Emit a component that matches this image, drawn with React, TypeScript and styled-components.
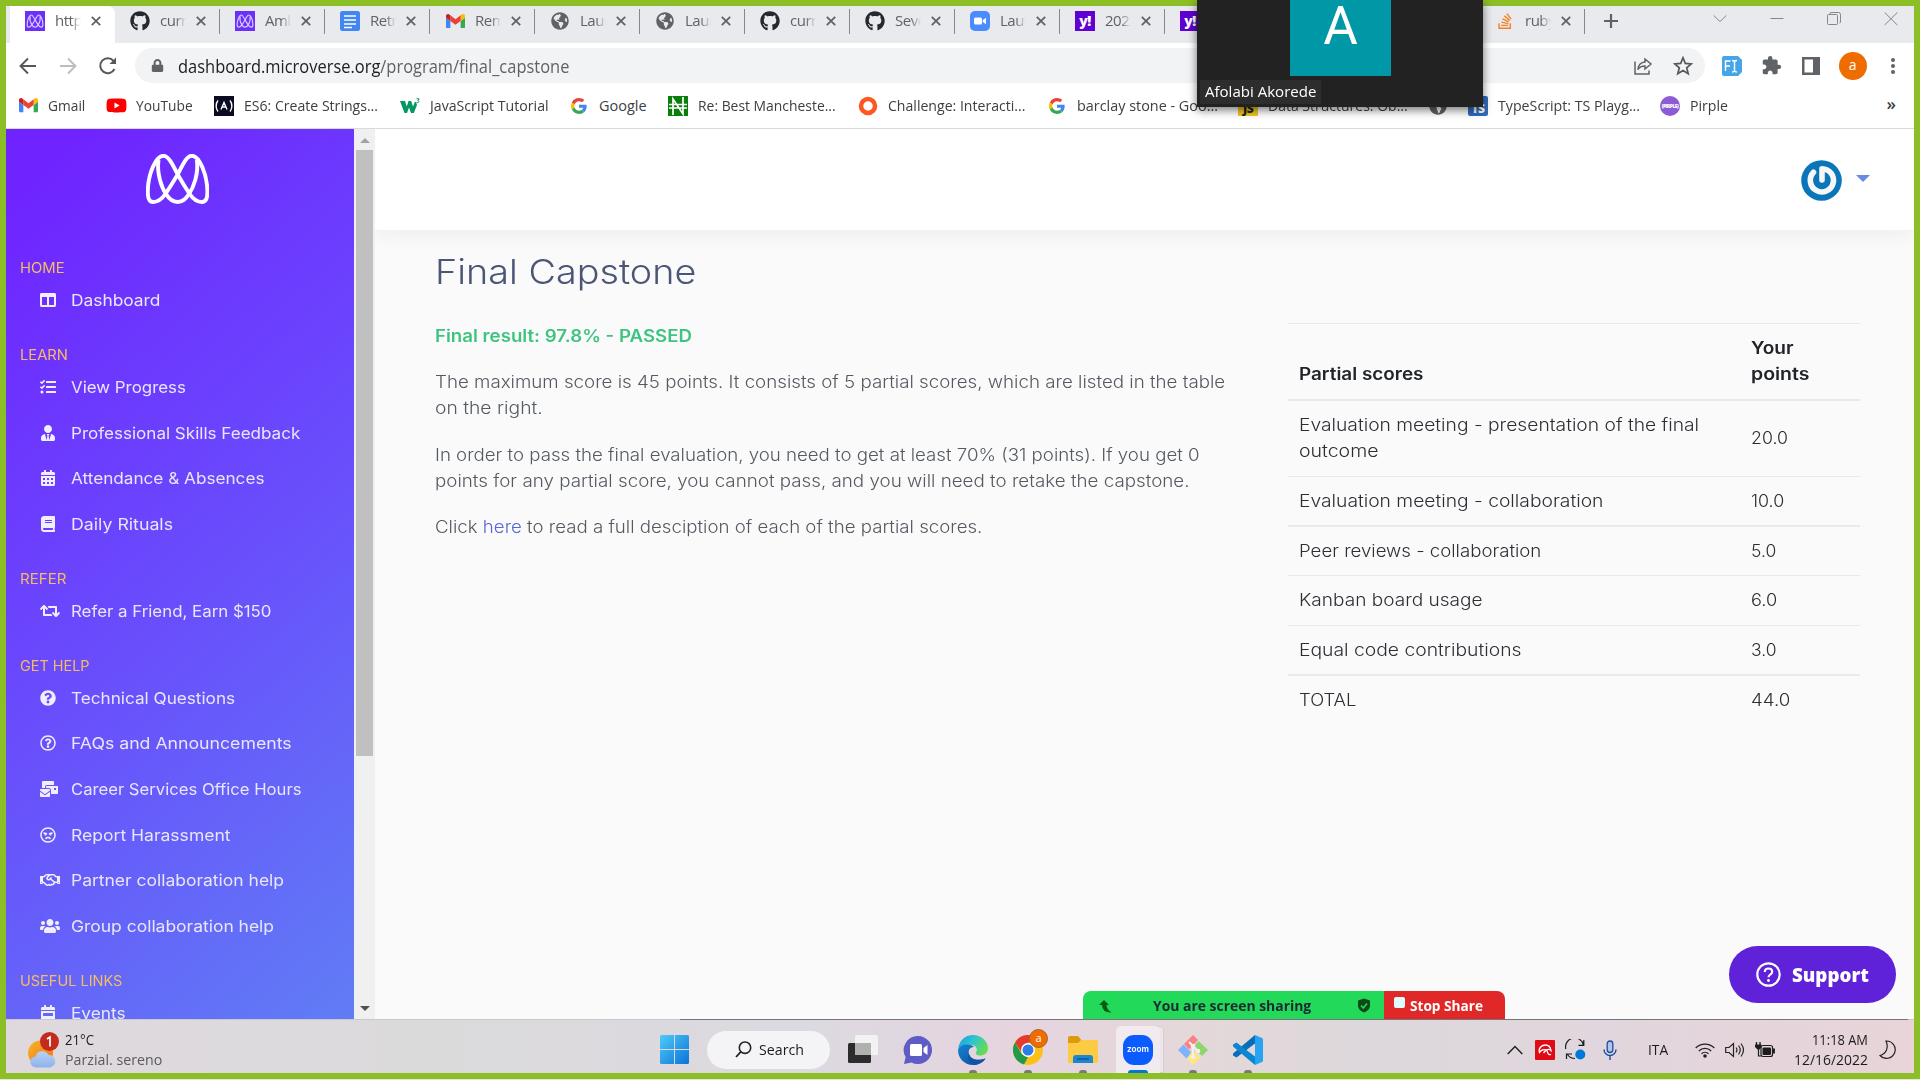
import React, { useLayoutEffect, useRef, useState } from 'react';
import styled, { createGlobalStyle, css } from 'styled-components';
import {
  FaColumns, FaTasks, FaUserTie, FaCalendarAlt, FaBook, FaRetweet, FaQuestionCircle,
  FaRegQuestionCircle, FaMailBulk, FaRegAngry, FaRegHandshake, FaUsers, FaCalendarWeek,
  FaGithub, FaGlobeAmericas, FaYoutube, FaLock, FaStackOverflow,
} from 'react-icons/fa';
import { MdExtension } from 'react-icons/md';

const ui = `"Open Sans", "Noto Sans", sans-serif`;
const brand = `Inter, "Open Sans", sans-serif`;

const Global = createGlobalStyle`
  * { box-sizing: border-box; }
  html, body { margin: 0; padding: 0; overflow: hidden; }
  body { font-family: ${ui}; background: #e9e1e4; }
  svg { display: block; flex: none; }
`;

/* Text stretched to a fixed measure */
const FitBox = styled.span<{ $w: number }>`
  display: inline-block;
  flex: none;
  width: ${p => p.$w}px;
  white-space: nowrap;
`;
const FitInner = styled.span`
  display: inline-block;
  transform-origin: 0 50%;
`;
function Fit({ w, children }: { w: number; children: React.ReactNode }) {
  const ref = useRef<HTMLSpanElement>(null);
  const [k, setK] = useState(1);
  useLayoutEffect(() => {
    if (ref.current && ref.current.offsetWidth) setK(w / ref.current.offsetWidth);
  }, [w]);
  return (
    <FitBox $w={w}>
      <FitInner ref={ref} style={{ transform: `scaleX(${k})` }}>{children}</FitInner>
    </FitBox>
  );
}

const Desktop = styled.div`
  position: relative;
  width: 1920px;
  height: 1080px;
  overflow: hidden;
`;
const Screen = styled.div`
  position: relative;
  width: 1920px;
  height: 1079px;
  border: 6px solid #8cbe26;
  display: flex;
  flex-direction: column;
  overflow: hidden;
  background: #fff;
`;

/* ---------- tab strip ---------- */
const TabStrip = styled.div`
  height: 37px;
  flex: none;
  display: flex;
  background: #e8eaed;
  padding-left: 4px;
`;
const TabItem = styled.div<{ $active?: boolean; $line?: boolean }>`
  width: 105px;
  flex: none;
  height: 37px;
  padding: 0 0 0 15px;
  display: flex;
  align-items: flex-start;
  position: relative;
  border-radius: 0 8px 0 0;
  background: ${p => (p.$active ? '#fff' : 'transparent')};
  ${p => p.$line && css`
    &::after { content: ''; position: absolute; right: 0; top: 3px; width: 1px; height: 25px; background: #85888c; }
  `}
`;
const Favicon = styled.div`
  width: 20px;
  height: 20px;
  margin-top: 5px;
  display: flex;
  align-items: center;
  justify-content: center;
`;
const TabTitle = styled.div`
  width: 26px;
  margin: 3px 0 0 10px;
  overflow: hidden;
  white-space: nowrap;
  font-size: 15px;
  line-height: 22px;
  letter-spacing: -0.5px;
  color: #5f6368;
  mask-image: linear-gradient(90deg, #000 60%, transparent 100%);
`;
const TabClose = styled.div`
  margin: 10px 0 0 10px;
`;
const NewTab = styled.div`
  margin: 7px 0 0 18px;
`;
const WindowControls = styled.div`
  margin-left: auto;
  display: flex;
  gap: 43px;
  padding: 5px 16px 0 0;
`;

/* ---------- toolbar ---------- */
const Toolbar = styled.div`
  height: 45px;
  flex: none;
  display: flex;
  align-items: center;
  padding: 0 14px 0 12px;
`;
const NavButtons = styled.div`
  display: flex;
  gap: 20px;
  width: 117px;
`;
const Omnibox = styled.div`
  width: 1570px;
  height: 35px;
  border-radius: 18px;
  background: #f1f3f4;
  display: flex;
  align-items: center;
  padding: 0 12px 0 16px;
  font-size: 17.5px;
  color: #5f6368;
`;
const Host = styled.span`
  color: #202124;
`;
const UrlText = styled.div`
  margin-left: 14px;
  margin-right: auto;
  line-height: 24px;
`;
const OmniActions = styled.div`
  display: flex;
  gap: 20px;
`;
const Extensions = styled.div`
  display: flex;
  align-items: center;
  margin-left: 17px;
  flex: 1;
  justify-content: space-between;
`;
const Profile = styled.div`
  width: 28px;
  height: 28px;
  border-radius: 50%;
  background: #ef6c00;
  color: #fff;
  font-size: 14px;
  line-height: 26px;
  text-align: center;
`;

/* ---------- bookmarks ---------- */
const Bookmarks = styled.div`
  height: 41px;
  flex: none;
  display: flex;
  align-items: center;
  padding: 0 0 5px 12px;
  border-bottom: 1px solid #d9dadc;
  position: relative;
`;
const Bookmark = styled.div<{ $gap: number }>`
  display: flex;
  align-items: center;
  margin-right: ${p => p.$gap}px;
  gap: 10px;
  font-size: 14.5px;
  line-height: 20px;
  color: #3c4043;
`;
const BookmarkIcon = styled.div`
  width: 20px;
  height: 20px;
  display: flex;
  align-items: center;
  justify-content: center;
`;
const More = styled.div`
  margin: -3px 18px 0 auto;
  font-size: 17px;
  line-height: 20px;
  font-weight: 600;
  color: #3c4043;
`;

/* ---------- page ---------- */
const Page = styled.div`
  flex: 1;
  min-height: 0;
  display: flex;
`;
const Sidebar = styled.nav`
  width: 348px;
  flex: none;
  overflow: hidden;
  background: linear-gradient(138deg, #6f23ff 5%, #6a47fd 45%, #607df5 100%);
  font-family: ${brand};
`;
const LogoRow = styled.div`
  height: 123px;
  padding: 25px 0 0 140px;
`;
const Section = styled.div`
  margin-bottom: 23px;
`;
const SectionTitle = styled.div`
  height: 32px;
  padding-left: 14px;
  line-height: 33px;
  font-size: 13.8px;
  color: #f5bd61;
`;
const NavItem = styled.div`
  height: 32px;
  margin-bottom: 13.6px;
  padding-left: 34px;
  display: flex;
  align-items: center;
  font-size: 16px;
  color: #e9e6fb;
  &:last-child { margin-bottom: 0; }
`;
const NavIcon = styled.div`
  width: 31px;
  font-size: 16px;
  color: #f0eefc;
`;
const Scrollbar = styled.div`
  width: 21px;
  flex: none;
  background: #f0f0f0;
  display: flex;
  flex-direction: column;
  align-items: center;
  padding: 9px 0 8px;
`;
const Thumb = styled.div`
  width: 17px;
  height: 606px;
  margin: 7px 0 auto;
  background: #c0c0c0;
`;
const Arrow = styled.div<{ $down?: boolean }>`
  border: 5px solid transparent;
  border-top-width: ${p => (p.$down ? 5 : 0)}px;
  border-bottom-width: ${p => (p.$down ? 0 : 5)}px;
  border-top-color: ${p => (p.$down ? '#505050' : 'transparent')};
  border-bottom-color: ${p => (p.$down ? 'transparent' : '#a3a3a3')};
`;
const Main = styled.main`
  flex: 1;
  background: #fafafa;
  font-family: ${brand};
  display: flex;
  flex-direction: column;
`;
const TopBar = styled.header`
  height: 101px;
  flex: none;
  background: #fff;
  box-shadow: 0 3px 18px rgba(90, 97, 105, 0.09);
  clip-path: inset(0 0 -30px 0);
  display: flex;
  justify-content: flex-end;
  align-items: center;
  gap: 14px;
  padding: 1px 44px 0 0;
`;
const Caret = styled.div`
  border: 7px solid transparent;
  border-top-color: #6889e4;
  border-bottom-width: 0;
  margin-top: -3px;
`;
const Title = styled.h1`
  margin: 0;
  padding: 19px 0 0 60px;
  height: 93px;
  font-size: 34px;
  line-height: 46px;
  font-weight: 300;
  color: #4b5674;
`;
const Columns = styled.div`
  display: flex;
  padding-left: 60px;
`;
const Copy = styled.section`
  width: 853px;
  flex: none;
  font-size: 16.8px;
  line-height: 26px;
  font-weight: 350;
  color: #545a62;
`;
const Result = styled.p`
  margin: 0 0 20.4px;
  font-weight: 600;
  color: #3ec480;
`;
const Para = styled.p`
  margin: 0 0 20.4px;
  display: flex;
  flex-direction: column;
  align-items: flex-start;
`;
const Anchor = styled.a`
  color: #5767d8;
`;
const Scores = styled.div`
  width: 572px;
  border-top: 1px solid #e6e9ed;
  font-size: 16.8px;
  line-height: 26px;
  font-weight: 350;
  color: #2b2f34;
`;
const ScoreRow = styled.div<{ $heavy?: boolean; $head?: boolean; $h: number; $last?: boolean }>`
  display: grid;
  grid-template-columns: 452px 1fr;
  align-items: ${p => (p.$head ? 'end' : 'center')};
  height: ${p => p.$h}px;
  padding: ${p => (p.$head ? '0 0 12px 11px' : '0 0 1px 11px')};
  border-bottom: ${p => (p.$last ? 0 : p.$heavy ? 2 : 1)}px solid #e6ebef;
  ${p => p.$head && css`font-weight: 600; color: #212529;`}
`;
const Lines = styled.div`
  display: flex;
  flex-direction: column;
`;

/* ---------- floating pieces ---------- */
const Participant = styled.div`
  position: absolute;
  left: 1197px;
  top: 0;
  width: 286px;
  height: 107px;
  background: #222;
  box-shadow: 0 3px 9px rgba(0, 0, 0, 0.55);
  z-index: 4;
  display: flex;
  flex-direction: column;
  align-items: flex-start;
`;
const Initial = styled.div`
  width: 101px;
  height: 76px;
  margin-left: 93px;
  background: #0097a7;
  color: #fff;
  font-family: Roboto, sans-serif;
  font-size: 53px;
  line-height: 53px;
  text-align: center;
`;
const PersonName = styled.div`
  margin: 4px 0 0 3px;
  height: 24px;
  padding: 0 5px;
  background: #2d2d2d;
  color: #fff;
  font-size: 14.5px;
  line-height: 24px;
`;
const Support = styled.button`
  position: absolute;
  left: 1723px;
  top: 940px;
  width: 167px;
  height: 57px;
  border: 0;
  border-radius: 29px;
  padding: 0 0 0 27px;
  background: #5f22d9;
  color: #fff;
  display: flex;
  align-items: center;
  gap: 10px;
  font: 800 18.5px/26px ${ui};
`;
const ShareBar = styled.div`
  position: absolute;
  left: 1077px;
  top: 985px;
  width: 422px;
  height: 28px;
  border-radius: 8px 8px 0 0;
  overflow: hidden;
  display: flex;
  font-size: 14px;
  font-weight: 700;
  line-height: 29px;
`;
const Sharing = styled.div`
  width: 301px;
  background: #23d959;
  color: #1c2b33;
  display: flex;
  align-items: center;
  padding: 1px 0 0 15px;
`;
const SharingText = styled.div`
  margin: 0 46px 0 41px;
`;
const StopShare = styled.div`
  flex: 1;
  background: #e02828;
  color: #fff;
  display: flex;
  padding-left: 10px;
  gap: 5px;
`;
const StopSquare = styled.div`
  width: 11px;
  height: 11px;
  margin-top: 6px;
  border-radius: 2px;
  background: #e1fbfb;
`;

/* ---------- taskbar ---------- */
const Taskbar = styled.footer`
  height: 54px;
  flex: none;
  display: flex;
  align-items: center;
  padding-top: 6px;
  background: linear-gradient(90deg, #dfd9de 0, #dbdadb 22%, #dcd9e0 42%, #e6d4df 53%, #e4d8d9 62%, #dcd8dc 72%, #e1d6dd 84%, #e8d4d9 100%);
  border-top: 1px solid #c9c8ca;
  position: relative;
`;
const WindowEdge = styled.div`
  position: absolute;
  left: 674px;
  top: -1px;
  width: 1228px;
  height: 1px;
  background: #77757a;
`;
const Weather = styled.div`
  display: flex;
  width: 654px;
  padding-left: 21px;
  gap: 6px;
  align-items: center;
`;
const WeatherText = styled.div`
  display: flex;
  flex-direction: column;
  font-size: 14.5px;
  line-height: 20px;
  color: #1f1f1f;
  & > :last-child { color: #5a5a5c; }
`;
const SearchPill = styled.div`
  width: 123px;
  height: 38px;
  margin: 0 18px;
  border-radius: 19px;
  background: #f4f3f6;
  display: flex;
  align-items: center;
  padding-left: 28px;
  gap: 7px;
  font-size: 14.5px;
  color: #1b1b1b;
`;
const AppSlot = styled.div<{ $open?: boolean; $focus?: boolean }>`
  width: 55px;
  height: 53px;
  flex: none;
  display: flex;
  align-items: center;
  justify-content: center;
  padding-top: 6px;
  position: relative;
  ${p => p.$open && css`
    &::after {
      content: ''; position: absolute; bottom: 0; left: 50%; transform: translateX(-50%);
      width: ${p.$focus ? 20 : 8}px; height: 3px; border-radius: 3px 3px 0 0;
      background: ${p.$focus ? '#0078d4' : '#7d777b'};
    }
  `}
`;
const Apps = styled.div`
  display: flex;
  margin: -6px 0 0 -13px;
`;
const FocusTile = styled.div`
  width: 44px;
  height: 47px;
  border-radius: 5px 5px 0 0;
  background: #f1eaee;
  box-shadow: 4px 0 0 -1px #eee5ea, 4px 0 0 0 #d6cdd2;
  display: flex;
  justify-content: center;
  padding-top: 9px;
`;
const ZoomLogo = styled.div`
  width: 30px;
  height: 30px;
  border-radius: 11px;
  background: #0b5cff;
  color: #fff;
  font: 600 9px/28px Inter, sans-serif;
  text-align: center;
`;
const Tray = styled.div`
  margin-left: auto;
  display: flex;
  align-items: center;
  padding-right: 18px;
  font-size: 14.5px;
  color: #1c1c1c;
`;
const TrayItem = styled.div<{ $ml: number }>`
  margin-left: ${p => p.$ml}px;
`;
const Clock = styled.div`
  margin: 0 11px 0 19px;
  display: flex;
  flex-direction: column;
  align-items: flex-end;
  line-height: 20px;
`;
const Badge = styled.div`
  position: absolute;
  left: 29px;
  top: 9px;
  width: 19px;
  height: 19px;
  border-radius: 50%;
  background: #ef6c00;
  border: 1px solid #a8632a;
  color: #fff;
  font-size: 11px;
  line-height: 16px;
  text-align: center;
`;

/* ---------- drawings ---------- */
const MPath = () => (
  <>
    <path d="M17.3 1.8C10 1.8 1.8 20 1.8 38 1.8 45 3.5 48 7 48c5 0 9-3 12.7-8.5 4.3-6.5 7.3-11.500 12-19C37 10 40.500 1.8 46 1.800 53 1.800 61.400 20 61.400 38c0 7-1.900 10-5.400 10-5 0-9-3-12.700-8.500-4.300-6.500-7.300-11.500-11.600-19C26.500 10 22.500 1.800 17.300 1.800Z" />
    <path d="M12.500 6C10.500 20 16 34 19.700 39.500 23 45 27 48 31.700 48c4.800 0 8.300-3 11.600-8.500C47 34 53 20 50.800 6" />
  </>
);
const Logo = () => (
  <svg width="63" height="50" viewBox="0 0 63 50" fill="none" stroke="#fff" strokeWidth="3.9"><MPath /></svg>
);
const MFav = () => (
  <svg width="20" height="20" viewBox="0 0 20 20">
    <rect width="20" height="20" fill="#6a2ff8" />
    <g transform="translate(1.700 3.500) scale(.264)" fill="none" stroke="#d9c8ff" strokeWidth="4.500"><MPath /></g>
  </svg>
);
const Gmail = ({ s = 19 }: { s?: number }) => (
  <svg width={s} height={s * 0.76} viewBox="0 0 24 18">
    <path d="M1.600 18h3.900V8.700L0 4.500v11.900C0 17.300.7 18 1.600 18z" fill="#4285f4" />
    <path d="M18.500 18h3.900c.9 0 1.600-.7 1.600-1.600V4.500l-5.500 4.200z" fill="#34a853" />
    <path d="M18.500 1.600v7.100L24 4.500V2.400c0-2-2.300-3.200-3.900-2z" fill="#fbbc04" />
    <path d="M5.500 8.700V1.600L12 6.500l6.500-4.900v7.100L12 13.600z" fill="#ea4335" />
    <path d="M0 2.400v2.100l5.500 4.200V1.600L3.900.4C2.300-.8 0 .4 0 2.400z" fill="#c5221f" />
  </svg>
);
const GoogleG = () => (
  <svg width="16" height="16" viewBox="0 0 48 48">
    <path fill="#EA4335" d="M24 9.500c3.540 0 6.710 1.220 9.210 3.600l6.850-6.850C35.900 2.380 30.470 0 24 0 14.620 0 6.510 5.380 2.560 13.220l7.980 6.190C12.430 13.720 17.740 9.500 24 9.500z" />
    <path fill="#4285F4" d="M46.980 24.550c0-1.570-.15-3.090-.38-4.550H24v9.020h12.940c-.58 2.960-2.260 5.480-4.780 7.180l7.730 6c4.510-4.180 7.090-10.360 7.090-17.650z" />
    <path fill="#FBBC05" d="M10.530 28.590c-.48-1.450-.76-2.990-.76-4.590s.27-3.140.76-4.590l-7.980-6.190C.92 16.460 0 20.120 0 24c0 3.880.92 7.540 2.560 10.780l7.970-6.190z" />
    <path fill="#34A853" d="M24 48c6.480 0 11.930-2.130 15.890-5.810l-7.730-6c-2.150 1.450-4.920 2.300-8.160 2.300-6.260 0-11.570-4.220-13.470-9.910l-7.980 6.190C6.510 42.620 14.620 48 24 48z" />
  </svg>
);
const Docs = () => (
  <svg width="20" height="20" viewBox="0 0 20 20">
    <rect width="20" height="20" rx="2.500" fill="#4285f4" />
    <path d="M4 5h12M4 9h12M4 13h12M4 16.500h8" stroke="#fff" strokeWidth="1.700" />
  </svg>
);
const ZoomCam = () => (
  <svg width="20" height="20" viewBox="0 0 20 20">
    <rect width="20" height="20" rx="5" fill="#4a8cff" />
    <rect x="4" y="6.500" width="8" height="7" rx="1.500" fill="#fff" />
    <path d="M12.800 9l3.200-2.300v6.600L12.800 11z" fill="#fff" />
  </svg>
);
const Square = styled.div<{ $bg: string; $fg?: string; $size?: number; $round?: string }>`
  width: 20px;
  height: 20px;
  background: ${p => p.$bg};
  color: ${p => p.$fg || '#fff'};
  border-radius: ${p => p.$round || '0'};
  font: 800 ${p => p.$size || 12}px/20px ${ui};
  text-align: center;
  letter-spacing: -0.5px;
  overflow: hidden;
`;
const LowSquare = styled(Square)`
  line-height: 26px;
`;
const Yahoo = () => <Square $bg="#5f01d1" $size={14}>y!</Square>;
const Cross = ({ s = 9 }: { s?: number }) => (
  <svg width={s + 1} height={s + 1} viewBox="0 0 10 10"><path d="M.8.8l8.400 8.400M9.200.8L.8 9.200" stroke="#5f6368" strokeWidth="1.800" /></svg>
);
const W3 = () => (
  <svg width="20" height="16" viewBox="0 0 20 16">
    <path d="M0 3h5l1.800 5.500L8.500 3h2.700l1.800 5.500L14.800 4H16l1 3-3.200 8H11L9 9.500 7 15H4.500z" fill="#059862" />
    <path d="M16.500 .8h2.700l-1.300 1.800c1.300 0 1.600 2.200-1.400 2" stroke="#059862" strokeWidth="1" fill="none" />
  </svg>
);
const Naira = () => (
  <svg width="20" height="20" viewBox="0 0 20 20">
    <rect width="20" height="20" fill="#0a7d0a" />
    <path d="M5 19V3l10 15V1M1 8.500h18M1 12h18" stroke="#fff" strokeWidth="1.700" fill="none" />
  </svg>
);
const Fcc = () => (
  <svg width="20" height="20" viewBox="0 0 20 20">
    <rect width="20" height="20" fill="#0a0a23" />
    <path d="M4 4.500C1.500 7.500 1.500 12.500 4 15.500M16 4.500c2.500 3 2.500 8 0 11M7 13.500l3-7 3 7M8.500 11h3" stroke="#fff" strokeWidth="1.400" fill="none" />
  </svg>
);
const Avatar = () => (
  <svg width="41" height="41" viewBox="0 0 41 41">
    <circle cx="20.500" cy="20.500" r="20.300" fill="#0a75b8" />
    <path d="M12.500 12.300a11.600 11.600 0 1 0 8.500-3.600V20" fill="none" stroke="#f6f6f6" strokeWidth="5.600" strokeLinecap="round" strokeLinejoin="round" />
  </svg>
);

const tabs: [React.ReactNode, string][] = [
  [<MFav />, 'https'], [<FaGithub size={20} color="#24292f" />, 'curric'], [<MFav />, 'Amb'],
  [<Docs />, 'Retro'], [<Gmail />, 'Rem'], [<FaGlobeAmericas size={18} color="#5f6368" />, 'Laun'],
  [<FaGlobeAmericas size={18} color="#5f6368" />, 'Laun'], [<FaGithub size={20} color="#24292f" />, 'curric'],
  [<FaGithub size={20} color="#24292f" />, 'Seve'], [<ZoomCam />, 'Laun'], [<Yahoo />, '2022'],
  [<Yahoo />, ''], [null, ''], [null, ''], [<FaStackOverflow size={18} color="#f48024" />, 'ruby'],
];

const marks: [React.ReactNode, string, number, number][] = [
  [<Gmail />, 'Gmail', 37, 21],
  [<FaYoutube size={21} color="#f00" />, 'YouTube', 57, 21],
  [<Fcc />, 'ES6: Create Strings...', 134, 22],
  [<W3 />, 'JavaScript Tutorial', 119, 20],
  [<GoogleG />, 'Google', 48, 21],
  [<Naira />, 'Re: Best Mancheste...', 138, 22],
  [<svg width="20" height="20"><circle cx="10" cy="10" r="7" fill="none" stroke="#ff5722" strokeWidth="4.500" /></svg>, 'Challenge: Interacti...', 137, 22],
  [<GoogleG />, 'barclay stone - Goo...', 141, 20],
  [<LowSquare $bg="#f0c91e" $fg="#222">JS</LowSquare>, 'Data Structures: Ob...', 140, 20],
  [<FaGlobeAmericas size={18} color="#5f6368" />, '', 0, 10],
  [<LowSquare $bg="#2f6dbd" $round="2px">TS</LowSquare>, 'TypeScript: TS Playg...', 142, 20],
  [<Square $bg="#8c5bd6" $size={5} $round="50%">(PIRPLE)</Square>, 'Pirple', 38, 0],
];

const nav: [string, number, [React.ReactNode, string, number][]][] = [
  ['HOME', 45, [[<FaColumns />, 'Dashboard', 90]]],
  ['LEARN', 48, [
    [<FaTasks />, 'View Progress', 115], [<FaUserTie />, 'Professional Skills Feedback', 229],
    [<FaCalendarAlt />, 'Attendance & Absences', 193], [<FaBook />, 'Daily Rituals', 102]]],
  ['REFER', 47, [[<FaRetweet size={20} />, 'Refer a Friend, Earn $150', 200]]],
  ['GET HELP', 70, [
    [<FaQuestionCircle />, 'Technical Questions', 164], [<FaRegQuestionCircle />, 'FAQs and Announcements', 221],
    [<FaMailBulk size={18} />, 'Career Services Office Hours', 230], [<FaRegAngry />, 'Report Harassment', 160],
    [<FaRegHandshake size={20} />, 'Partner collaboration help', 213], [<FaUsers size={20} />, 'Group collaboration help', 203]]],
  ['USEFUL LINKS', 102, [[<FaCalendarWeek />, 'Events', 55]]],
];

const rows: [string, number, string, number, number, boolean][] = [
  ['Evaluation meeting - collaboration', 304, '10.0', 33, 50, true],
  ['Peer reviews - collaboration', 242, '5.0', 25, 49, false],
  ['Kanban board usage', 184, '6.0', 26, 50, false],
  ['Equal code contributions', 222, '3.0', 25, 50, true],
];

export default function App() {
  return (
    <Desktop>
      <Global />
      <Screen>
        <TabStrip>
          {tabs.map(([icon, title], i) => (
            <TabItem key={i} $active={i === 0} $line={i > 0}>
              <Favicon>{icon}</Favicon>
              <TabTitle>{title}</TabTitle>
              {title && <TabClose><Cross /></TabClose>}
            </TabItem>
          ))}
          <NewTab><svg width="16" height="16" viewBox="0 0 16 16"><path d="M8 1v14M1 8h14" stroke="#5f6368" strokeWidth="2.200" /></svg></NewTab>
          <WindowControls>
            <svg width="14" height="16" viewBox="0 0 14 16"><path d="M.7 4.500L7 10.500l6.300-6" stroke="#85878b" fill="none" /></svg>
            <svg width="14" height="16" viewBox="0 0 14 16"><path d="M.5 7.500h13" stroke="#85878b" fill="none" /></svg>
            <svg width="14" height="16" viewBox="0 0 14 16"><path d="M3 3.500V2.500Q3 1.500 4 1.500h7.500q2 0 2 2V11q0 1-1 1M.5 4.500q0-1 1-1h8q1 0 1 1v8q0 1-1 1h-8q-1 0-1-1z" stroke="#85878b" fill="none" /></svg>
            <svg width="14" height="16" viewBox="0 0 14 16"><path d="M.7 1.500l12.600 12.500M13.300 1.500L.7 14" stroke="#85878b" fill="none" /></svg>
          </WindowControls>
        </TabStrip>

        <Toolbar>
          <NavButtons>
            <svg width="20" height="20" viewBox="0 0 20 20"><path d="M18 10H3M10 2.500L2.500 10l7.500 7.500" stroke="#54585d" strokeWidth="1.900" fill="none" /></svg>
            <svg width="20" height="20" viewBox="0 0 20 20"><path d="M2 10h15M10 2.500l7.500 7.500-7.500 7.500" stroke="#bbbdc0" strokeWidth="1.900" fill="none" /></svg>
            <svg width="20" height="20" viewBox="0 0 20 20"><path d="M16.500 13A7.500 7.500 0 1 1 15.500 4.800L17.500 7" stroke="#54585d" strokeWidth="2" fill="none" /><path d="M18 1.500V8h-6.500z" fill="#54585d" /></svg>
          </NavButtons>
          <Omnibox>
            <FaLock size={13} color="#5f6368" />
            <UrlText><Fit w={391}><Host>dashboard.microverse.org</Host>/program/final_capstone</Fit></UrlText>
            <OmniActions>
              <svg width="20" height="20" viewBox="0 0 20 20"><path d="M2 5.500v12.500h14v-3.500M12 3l6 5-6 5v-3C8.500 10 6.500 11 4.800 13.500 5.500 9 8 6.200 12 6z" stroke="#5f6368" strokeWidth="1.500" fill="none" /></svg>
              <svg width="20" height="20" viewBox="0 0 20 20"><path d="M10 1.800l2.300 5.600 6 .5-4.600 3.900 1.500 5.900-5.200-3.200-5.200 3.200 1.500-5.900L1.700 7.900l6-.5z" stroke="#54585d" strokeWidth="1.700" fill="none" /></svg>
            </OmniActions>
          </Omnibox>
          <Extensions>
            <svg width="20" height="20" viewBox="0 0 20 20"><path d="M2 0h14l4 4v12l-4 4H2q-2 0-2-2V2q0-2 2-2z" fill="#45a5e6" /><path d="M3.500 15V5h5M3.500 10H8M10 4.500q2 0 2.500 1 .5-1 2.500-1M12.500 5v10M10 16q2 0 2.500-1 .5 1 2.500 1" stroke="#fff" strokeWidth="1.500" fill="none" /></svg>
            <MdExtension size={21} color="#5f6368" />
            <svg width="18" height="18" viewBox="0 0 18 18"><path d="M0 0h18v18H0zM2.500 2.500v13h8.500v-13z" fill="#5f6368" fillRule="evenodd" /></svg>
            <Profile>a</Profile>
            <svg width="14" height="20" viewBox="0 0 14 20" fill="#5f6368"><circle cx="7" cy="4" r="2" /><circle cx="7" cy="10" r="2" /><circle cx="7" cy="16" r="2" /></svg>
          </Extensions>
        </Toolbar>

        <Bookmarks>
          {marks.map(([icon, label, w, gap], i) => (
            <Bookmark key={i} $gap={gap}>
              <BookmarkIcon>{icon}</BookmarkIcon>
              <Fit w={w}>{label}</Fit>
            </Bookmark>
          ))}
          <More>»</More>
        </Bookmarks>

        <Page>
          <Sidebar>
            <LogoRow><Logo /></LogoRow>
            {nav.map(([title, w, items]) => (
              <Section key={title}>
                <SectionTitle><Fit w={w}>{title}</Fit></SectionTitle>
                {items.map(([icon, label, lw]) => (
                  <NavItem key={label}><NavIcon>{icon}</NavIcon><Fit w={lw}>{label}</Fit></NavItem>
                ))}
              </Section>
            ))}
          </Sidebar>
          <Scrollbar><Arrow /><Thumb /><Arrow $down /></Scrollbar>
          <Main>
            <TopBar><Avatar /><Caret /></TopBar>
            <Title><Fit w={261}>Final Capstone</Fit></Title>
            <Columns>
              <Copy>
                <Result><Fit w={257}>Final result: 97.8% - PASSED</Fit></Result>
                <Para>
                  <Fit w={790}>The maximum score is 45 points. It consists of 5 partial scores, which are listed in the table</Fit>
                  <Fit w={108}>on the right.</Fit>
                </Para>
                <Para>
                  <Fit w={765}>In order to pass the final evaluation, you need to get at least 70% (31 points). If you get 0</Fit>
                  <Fit w={755}>points for any partial score, you cannot pass, and you will need to retake the capstone.</Fit>
                </Para>
                <Para>
                  <Fit w={547}>Click <Anchor>here</Anchor> to read a full desciption of each of the partial scores.</Fit>
                </Para>
              </Copy>
              <Scores>
                <ScoreRow $head $heavy $h={77}>
                  <Fit w={125}>Partial scores</Fit>
                  <Lines><Fit w={42}>Your</Fit><Fit w={58}>points</Fit></Lines>
                </ScoreRow>
                <ScoreRow $h={76}>
                  <Lines><Fit w={400}>Evaluation meeting - presentation of the final</Fit><Fit w={79}>outcome</Fit></Lines>
                  <Fit w={37}>20.0</Fit>
                </ScoreRow>
                {rows.map(([label, w, pts, pw, h, heavy]) => (
                  <ScoreRow key={label} $h={h} $heavy={heavy}>
                    <Fit w={w}>{label}</Fit><Fit w={pw}>{pts}</Fit>
                  </ScoreRow>
                ))}
                <ScoreRow $h={49} $last><Fit w={57}>TOTAL</Fit><Fit w={39}>44.0</Fit></ScoreRow>
              </Scores>
            </Columns>
          </Main>
        </Page>

        <Taskbar>
          <WindowEdge />
          <Weather>
            <svg width="32" height="38" viewBox="0 0 32 38">
              <defs>
                <linearGradient id="sun" x1="0" y1="0" x2="1" y2="1"><stop offset="0" stopColor="#f6b62c" /><stop offset="1" stopColor="#f0701a" /></linearGradient>
                <linearGradient id="cloud" x1="0" y1="0" x2="0" y2="1"><stop offset="0" stopColor="#b9d3f7" /><stop offset="1" stopColor="#8fb2ea" /></linearGradient>
              </defs>
              <circle cx="13.500" cy="22" r="12.500" fill="url(#sun)" />
              <path d="M9 36.500a5.500 5.500 0 0 1-.5-11 7 7 0 0 1 13-1.500 6.300 6.300 0 0 1 1.500 12.500z" fill="url(#cloud)" />
              <circle cx="22.500" cy="10.500" r="9.500" fill="#c42b1c" />
              <path d="M20 8l3-2v9.500" stroke="#fff" strokeWidth="1.700" fill="none" />
            </svg>
            <WeatherText><Fit w={29}>21°C</Fit><Fit w={97}>Parzial. sereno</Fit></WeatherText>
          </Weather>
          <svg width="29" height="29" viewBox="0 0 29 29">
            <defs><linearGradient id="win" x1="0" y1="0" x2="1" y2="1"><stop offset="0" stopColor="#4fcbfb" /><stop offset="1" stopColor="#0a73d6" /></linearGradient></defs>
            <path d="M1.500 0H14v14H0V1.500Q0 0 1.500 0zM15 0h12.500Q29 0 29 1.500V14H15zM0 15h14v14H1.500Q0 29 0 27.500zM15 15h14v12.500q0 1.500-1.500 1.500H15z" fill="url(#win)" />
          </svg>
          <SearchPill>
            <svg width="17" height="17" viewBox="0 0 17 17"><circle cx="10" cy="6.700" r="5.700" stroke="#222" strokeWidth="1.600" fill="none" /><path d="M6 10.700L1 16" stroke="#222" strokeWidth="1.800" /></svg>
            <Fit w={45}>Search</Fit>
          </SearchPill>
          <Apps>
            <AppSlot>
              <svg width="30" height="29" viewBox="0 0 30 29"><rect x="0" y="8" width="23" height="20" rx="1.500" fill="#2c2c2c" /><rect x="7" y="0" width="23" height="20" rx="1.500" fill="#f4f4f4" fillOpacity=".93" /><rect x="7" y="8" width="16" height="12" fill="#b0b0b0" /></svg>
            </AppSlot>
            <AppSlot>
              <svg width="30" height="30" viewBox="0 0 30 30"><path d="M15 1a14 14 0 1 1-6.500 26.400L1 29l1.600-7A14 14 0 0 1 15 1z" fill="#5f5cc6" /><rect x="7" y="9" width="12" height="12" rx="1.500" fill="#fff" /><path d="M20.500 13l4-3v10l-4-3z" fill="#fff" /></svg>
            </AppSlot>
            <AppSlot $open>
              <svg width="30" height="30" viewBox="0 0 30 30">
                <defs>
                  <linearGradient id="edgeTop" x1="0" y1="0" x2="1" y2=".5"><stop offset="0" stopColor="#159ad8" /><stop offset=".5" stopColor="#2fc4d0" /><stop offset="1" stopColor="#62dc55" /></linearGradient>
                  <linearGradient id="edgeLow" x1="0" y1="0" x2="1" y2="1"><stop offset="0" stopColor="#1683d6" /><stop offset="1" stopColor="#0d4a92" /></linearGradient>
                </defs>
                <path d="M.2 14C1 6 7 0 15 0c9 0 15 7 15 13 0 5-4 7.500-8 7.500-3 0-5-1.500-4-3 2-3 .5-7-4-7.500C8 9.500 2 12 .2 14z" fill="url(#edgeTop)" />
                <path d="M0 15C1 11.500 5 9.500 9 9.500c3 0 6 1 7 2.500-4 0-6 3-5 7 1.500 5 8 7.500 16.500 4.500C25 27.500 20 30 15 30 6 30 0 23 0 15z" fill="url(#edgeLow)" />
                <path d="M11 19c1.500 5 8 7.500 16.500 4.500C25 27.500 20 30 16 30c-4-.5-7-6-5-11z" fill="#0e56a5" />
              </svg>
            </AppSlot>
            <AppSlot $open>
              <svg width="30" height="30" viewBox="0 0 30 30"><circle cx="15" cy="15" r="15" fill="#fbc116" /><path d="M2 7.500A15 15 0 0 1 28 7.500H15L9 18z" fill="#e33b2e" /><path d="M2 7.500L8.500 18.700 15 22l-4 7.500A15 15 0 0 1 2 7.500z" fill="#229a48" /><circle cx="15" cy="15" r="7" fill="#fff" /><circle cx="15" cy="15" r="5.500" fill="#2f7de9" /></svg>
              <Badge>a</Badge>
            </AppSlot>
            <AppSlot $open>
              <svg width="30" height="28" viewBox="0 0 30 28"><path d="M0 2q0-2 2-2h8l3 3.500V9H0z" fill="#dd9a0a" /><path d="M0 7h10l3-3h15.500Q30 4 30 5.500v20q0 1.500-1.500 1.500h-27Q0 27 0 25.500z" fill="#fdcb43" /><path d="M5 27v-5q0-3 3-3h14q3 0 3 3v5z" fill="#1c86d0" /><path d="M9 23h12" stroke="#0b4f86" strokeWidth="1.200" /></svg>
            </AppSlot>
            <AppSlot $open $focus><FocusTile><ZoomLogo><Fit w={22}>zoom</Fit></ZoomLogo></FocusTile></AppSlot>
            <AppSlot $open>
              <svg width="30" height="30" viewBox="0 0 30 30"><path d="M15 0l5 5-9 9.500L6 9z" fill="#fa8083" /><path d="M5.500 9.500L14 18l-5.500 5.500L0 15z" fill="#80b3ff" /><path d="M20.500 6L30 15l-6 6-9-9z" fill="#8ed56c" /><path d="M14 16l9 6-8 8-6-6.500z" fill="#ffe680" /><path d="M11 7l9 9M15 11v11" stroke="#f5efec" strokeWidth="2" /><circle cx="15" cy="11" r="2.300" fill="#f5efec" /><circle cx="20" cy="16" r="2.300" fill="#f5efec" /><circle cx="15" cy="22" r="2.300" fill="#f5efec" /></svg>
            </AppSlot>
            <AppSlot $open>
              <svg width="30" height="30" viewBox="0 0 30 30"><path d="M22 0v8.500L3.500 22.500 0 20.500v-2z" fill="#0a6db8" /><path d="M22 30v-8.500L3.500 7.500 0 9.500v2z" fill="#0b86d0" /><path d="M22 0l7 3q1 .5 1 1.500v21q0 1-1 1.500l-7 3z" fill="#26a3f1" /></svg>
            </AppSlot>
          </Apps>
          <Tray>
            <svg width="16" height="10" viewBox="0 0 16 10"><path d="M.7 9L8 1.500 15.300 9" stroke="#222" strokeWidth="1.500" fill="none" /></svg>
            <TrayItem $ml={12}>
              <svg width="20" height="20" viewBox="0 0 20 20"><rect width="20" height="20" rx="1" fill="#df0a16" /><path d="M4.500 12.500C3 8 7 5 10.500 5c3 0 5 2.500 5.500 5.500-1.500-1.500-3-1.500-4.500-.5-2.500-.8-5.500 0-7 2.500zM11.500 9.500L8.500 13M11.500 9.500l1.500 4q1 1.800 3 .8" stroke="#fff" strokeWidth="1.300" fill="none" /></svg>
            </TrayItem>
            <TrayItem $ml={10}>
              <svg width="21" height="21" viewBox="0 0 21 21"><path d="M.8 10A9 9 0 0 1 18.500 6M18.800 1v5.300h-5.300M10 19.500Q5 19.500 2.500 15.500M1.500 20v-5h5.500" stroke="#1c1c1c" strokeWidth="1.200" fill="none" /><circle cx="15.300" cy="15.500" r="5" fill="#0078d7" /></svg>
            </TrayItem>
            <TrayItem $ml={17}>
              <svg width="14" height="20" viewBox="0 0 14 20"><rect x="4.200" y="1" width="5.600" height="11.500" rx="2.800" stroke="#1b4ea3" strokeWidth="1.300" fill="#b8c4e2" /><path d="M1 9.500a6 6 0 0 0 12 0M7 15.500V20" stroke="#1b4ea3" strokeWidth="1.400" fill="none" /></svg>
            </TrayItem>
            <TrayItem $ml={31}><Fit w={20}>ITA</Fit></TrayItem>
            <TrayItem $ml={27}>
              <svg width="20" height="16" viewBox="0 0 20 16"><path d="M.7 6a13.200 13.200 0 0 1 18.600 0M3.800 9a8.800 8.800 0 0 1 12.400 0M6.500 11.800a5 5 0 0 1 7 0" stroke="#222" strokeWidth="1.300" fill="none" /><circle cx="10" cy="14" r="1.800" fill="#222" /></svg>
            </TrayItem>
            <TrayItem $ml={10}>
              <svg width="20" height="16" viewBox="0 0 20 16"><path d="M.7 5.500H4L8.500 1.500v13L4 10.500H.7zM11 5.500q2 2.500 0 5M13.500 3.500q3.500 4.500 0 9M16 1.500q5 6.500 0 13" stroke="#222" strokeWidth="1.200" fill="none" /></svg>
            </TrayItem>
            <TrayItem $ml={10}>
              <svg width="20" height="16" viewBox="0 0 20 16"><path d="M1.500 0v3M5 0v3" stroke="#1c1c1c" strokeWidth="1.300" /><path d="M0 2.500h6.500V5L4.500 7.500h-2L0 5z" fill="#1c1c1c" /><path d="M3.500 7v7h3" stroke="#1c1c1c" strokeWidth="1.200" fill="none" /><rect x="6" y="3.500" width="11.500" height="11" rx="2" stroke="#1c1c1c" fill="none" strokeWidth="1.200" /><rect x="7.500" y="5.500" width="8.500" height="7.500" rx="1" fill="#1c1c1c" /><path d="M18.800 6.500v5" stroke="#1c1c1c" strokeWidth="2.200" /></svg>
            </TrayItem>
            <Clock><Fit w={56}>11:18 AM</Fit><Fit w={74}>12/16/2022</Fit></Clock>
            <svg width="17" height="19" viewBox="0 0 17 19"><path d="M7 1a8.700 8.700 0 1 1-6 14.500C7 14 10 8 7 1z" stroke="#222" strokeWidth="1.200" fill="none" /></svg>
          </Tray>
        </Taskbar>

        <Support>
          <svg width="25" height="25" viewBox="0 0 25 25"><circle cx="12.500" cy="12.500" r="11.200" stroke="#fff" strokeWidth="2.200" fill="none" /><path d="M8.800 10q0-3.500 3.700-3.500t3.700 3.200q0 1.600-1.900 2.800-1.800 1.200-1.800 2.800" stroke="#fff" strokeWidth="2.100" fill="none" /><circle cx="12.500" cy="18.500" r="1.400" fill="#fff" /></svg>
          <Fit w={77}>Support</Fit>
        </Support>
        <ShareBar>
          <Sharing>
            <svg width="14" height="14" viewBox="0 0 14 14"><path d="M6 1L11 6H8.500q0 4 5 7.500-9 .5-9.500-7.500H1z" fill="#0a5a0f" /></svg>
            <SharingText><Fit w={158}>You are screen sharing</Fit></SharingText>
            <svg width="14" height="15" viewBox="0 0 14 15"><path d="M7 .5L13 2.500v5q0 4.500-6 7-6-2.500-6-7v-5z" fill="#0c4a17" /><path d="M4 7.500L6.300 10 10 5.500" stroke="#23d959" strokeWidth="1.600" fill="none" /></svg>
          </Sharing>
          <StopShare><StopSquare /><Fit w={73}>Stop Share</Fit></StopShare>
        </ShareBar>
      </Screen>
      <Participant>
        <Initial>A</Initial>
        <PersonName><Fit w={111}>Afolabi Akorede</Fit></PersonName>
      </Participant>
    </Desktop>
  );
}
